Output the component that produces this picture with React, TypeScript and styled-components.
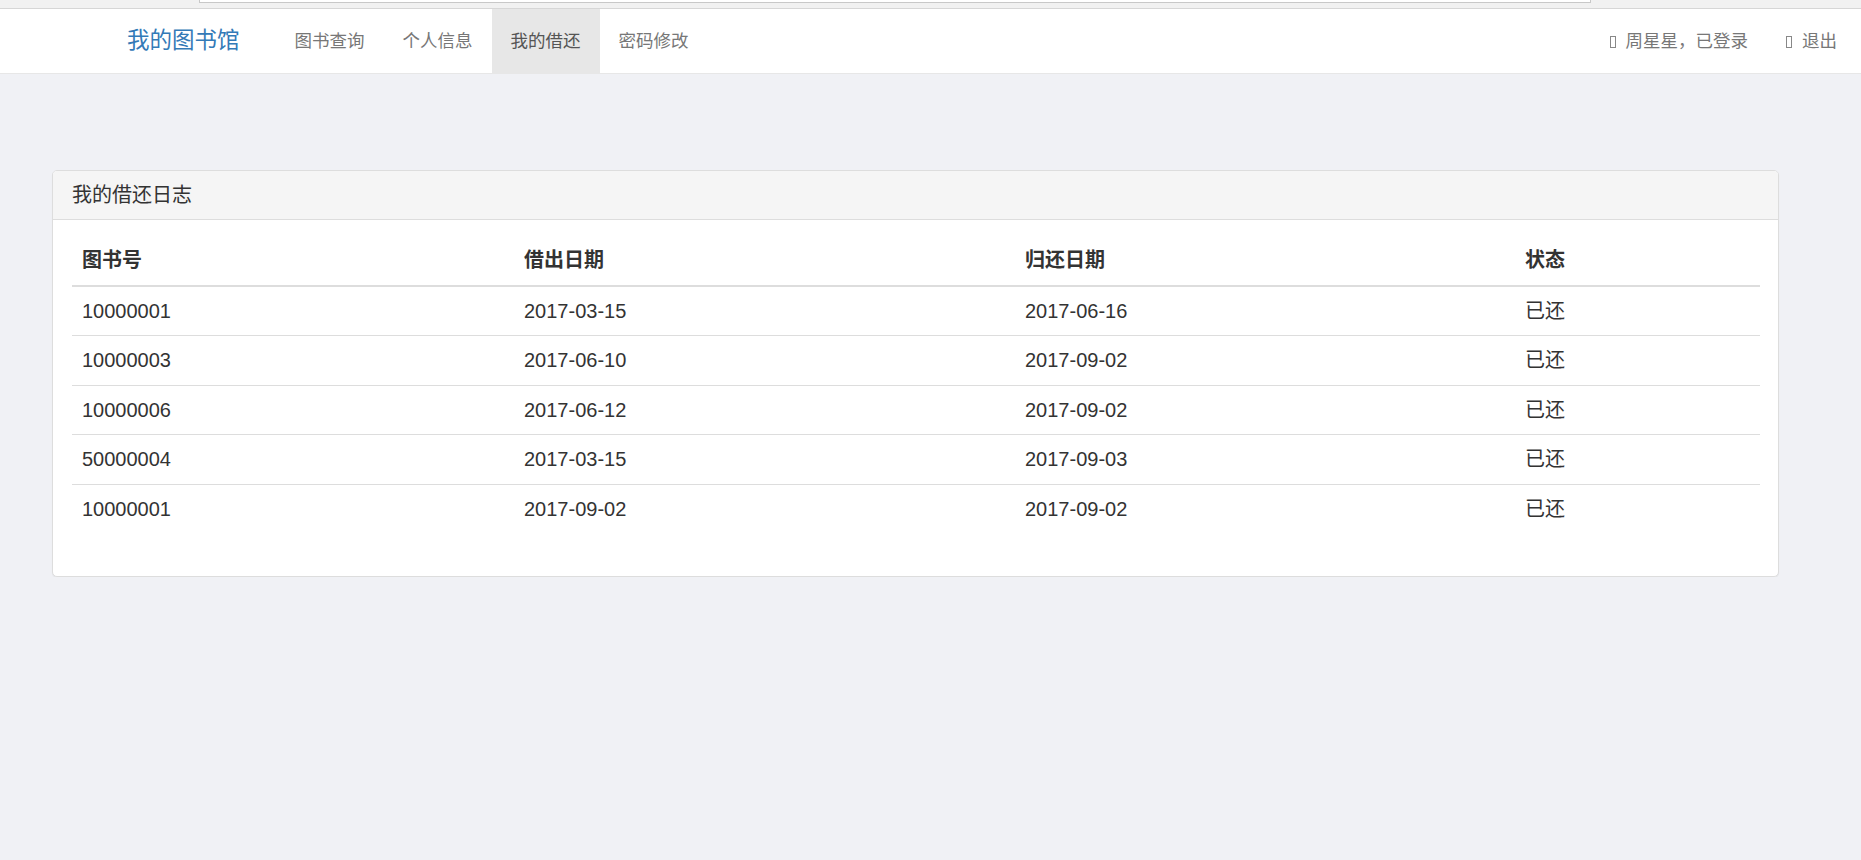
import React from 'react';
import styled, {createGlobalStyle} from "styled-components";

type BorrowRecord = {
    bookId: string;
    lendDate: string;
    backDate: string;
    state: string;
}

const records: BorrowRecord[] = [
    {bookId: "10000001", lendDate: "2017-03-15", backDate: "2017-06-16", state: "已还"},
    {bookId: "10000003", lendDate: "2017-06-10", backDate: "2017-09-02", state: "已还"},
    {bookId: "10000006", lendDate: "2017-06-12", backDate: "2017-09-02", state: "已还"},
    {bookId: "50000004", lendDate: "2017-03-15", backDate: "2017-09-03", state: "已还"},
    {bookId: "10000001", lendDate: "2017-09-02", backDate: "2017-09-02", state: "已还"},
];

const navLinks = ["图书查询", "个人信息", "我的借还", "密码修改"];

const GlobalStyle = createGlobalStyle`
  html, body {
    margin: 0;
    padding: 0;
    background: #f0f1f5;
    font-family: "Liberation Sans", "Noto Sans CJK SC", sans-serif;
    color: #333;
  }
  * {
    box-sizing: border-box;
  }
`

export default function App() {
    return (
        <>
            <GlobalStyle/>
            <ChromeBar>
                <AddressBox/>
            </ChromeBar>
            <Navbar>
                <Brand>我的图书馆</Brand>
                <NavList>
                    {navLinks.map(link => (
                        <NavLink key={link} active={link === "我的借还"}>{link}</NavLink>
                    ))}
                </NavList>
                <RightNav>
                    <NavLink><Tofu/>周星星，已登录</NavLink>
                    <NavLink><Tofu/>退出</NavLink>
                </RightNav>
            </Navbar>
            <Content>
                <Panel>
                    <PanelHeading>我的借还日志</PanelHeading>
                    <PanelBody>
                        <Table>
                            <colgroup>
                                <col style={{width: 442}}/>
                                <col style={{width: 501}}/>
                                <col style={{width: 500}}/>
                                <col style={{width: 245}}/>
                            </colgroup>
                            <thead>
                            <tr>
                                <Th>图书号</Th>
                                <Th>借出日期</Th>
                                <Th>归还日期</Th>
                                <Th>状态</Th>
                            </tr>
                            </thead>
                            <tbody>
                            {records.map((r, i) => (
                                <tr key={i}>
                                    <Td>{r.bookId}</Td>
                                    <Td>{r.lendDate}</Td>
                                    <Td>{r.backDate}</Td>
                                    <Td>{r.state}</Td>
                                </tr>
                            ))}
                            </tbody>
                        </Table>
                    </PanelBody>
                </Panel>
            </Content>
        </>
    );
}

const ChromeBar = styled.div`
  height: 9px;
  background: #f1f1f1;
  border-bottom: 1px solid #d6d6d6;
`

const AddressBox = styled.div`
  margin-left: 199px;
  width: 1392px;
  height: 3px;
  background: #fff;
  border: 1px solid #c8c8c8;
  border-top: 0;
`

const Navbar = styled.nav`
  display: flex;
  align-items: stretch;
  height: 65px;
  background: #fff;
  border-bottom: 1px solid #e7e7e7;
`

const Brand = styled.a`
  margin-left: 108px;
  padding: 0 19px;
  font-size: 22.5px;
  line-height: 64px;
  color: #337ab7;
  cursor: pointer;
`

const NavList = styled.div`
  display: flex;
  margin-left: 17px;
`

const RightNav = styled.div`
  display: flex;
  margin-left: auto;
  padding-right: 5px;
`

const NavLink = styled.a<{ active?: boolean }>`
  display: flex;
  align-items: center;
  padding: 0 19px;
  font-size: 17.5px;
  line-height: 64px;
  color: ${({active}) => active ? "#555" : "#777"};
  background: ${({active}) => active ? "#e7e7e7" : "transparent"};
  cursor: pointer;
`

const Tofu = styled.span`
  display: inline-block;
  width: 6px;
  height: 12px;
  margin: 1px 10px 0 0;
  border: 1px solid #888;
`

const Content = styled.main`
  padding: 96px 0 0 52px;
`

const Panel = styled.section`
  width: 1727px;
  background: #fff;
  border: 1px solid #ddd;
  border-radius: 5px;
  box-shadow: 0 1px 1px rgba(0, 0, 0, .05);
  overflow: hidden;
`

const PanelHeading = styled.div`
  padding: 9.7px 19px;
  font-size: 20px;
  line-height: 28.6px;
  color: #333;
  background: #f5f5f5;
  border-bottom: 1px solid #ddd;
`

const PanelBody = styled.div`
  padding: 16px 19px 17px;
`

const Table = styled.table`
  width: 1688px;
  table-layout: fixed;
  border-collapse: collapse;
  margin-bottom: 25px;
  font-size: 20px;
  line-height: 28.6px;
`

const Th = styled.th`
  padding: 10px;
  text-align: left;
  font-weight: bold;
  color: #333;
  border-bottom: 2px solid #ddd;
`

const Td = styled.td`
  padding: 10px;
  color: #333;
  border-top: 1px solid #ddd;
`
